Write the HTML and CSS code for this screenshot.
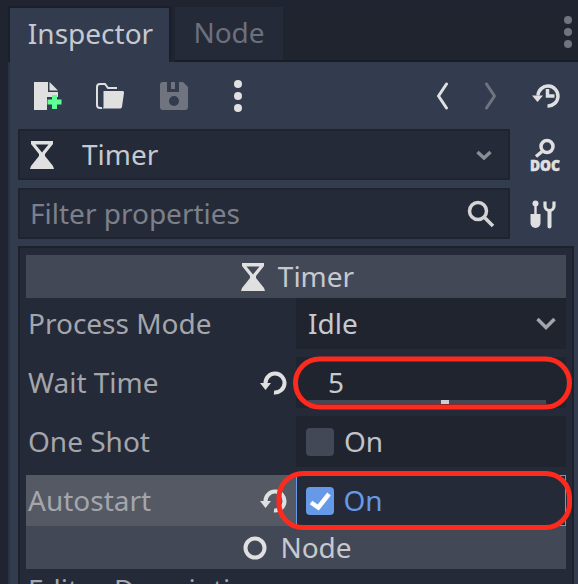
FILE: index.html
```html
<!DOCTYPE html>
<html lang="en">
<head>
<meta charset="utf-8">
<title>Inspector</title>
<link rel="stylesheet" href="styles.css">
</head>
<body>
<div class="dock">
  <div class="tabs">
    <div class="tab tab-active">Inspector</div>
    <div class="tab tab-idle">Node</div>
    <div class="tab-fill">
      <svg class="tab-menu" width="10" height="34" viewBox="0 0 10 34"><g fill="#71747f"><circle cx="5" cy="5" r="4"/><circle cx="5" cy="17" r="4"/><circle cx="5" cy="29" r="4"/></g></svg>
    </div>
  </div>
  <div class="panel">
    <div class="toolbar">
      <div class="tool-left">
        <svg class="tb-new" width="28" height="30" viewBox="0 0 28 30"><path fill="#e0e0e0" d="M0 1h14v10h10v5h-11v13H0z"/><path fill="#e0e0e0" d="M15.500 1L24 9.500h-8.500z"/><path fill="#5fff97" d="M18 17h5v4.500h4.500v5H23v4.500h-5v-4.500h-4.500v-5H18z" transform="translate(0 -3)"/></svg>
        <svg class="tb-open" width="28" height="26" viewBox="0 0 28 26"><path fill="none" stroke="#e0e0e0" stroke-width="2" d="M6 25H4a3 3 0 0 1-3-3V4a3 3 0 0 1 3-3h5l3 4h9"/><path fill="#e0e0e0" d="M8 8h18.500c1 0 1.600 .8 1.500 1.700l-2 14c-.2 1-1 1.800-2 1.800H6c1 0 1.500-1 1.500-2V9c0-.6 0-1 .5-1z"/></svg>
        <svg class="tb-save" width="28" height="28" viewBox="0 0 28 28"><path fill="#70747f" fill-rule="evenodd" d="M3 0h4v10h12V0h4l5 5v20a3 3 0 0 1-3 3H3a3 3 0 0 1-3-3V3a3 3 0 0 1 3-3zM11 0h4v7h-4zM14 14a5 5 0 1 0 0 10 5 5 0 0 0 0-10z"/></svg>
        <svg class="tb-dots" width="10" height="32" viewBox="0 0 10 32"><g fill="#e0e0e0"><circle cx="5" cy="4" r="4"/><circle cx="5" cy="16" r="4"/><circle cx="5" cy="28" r="4"/></g></svg>
      </div>
      <div class="tool-right">
        <svg width="13" height="28" viewBox="0 0 13 28"><path fill="none" stroke="#e0e0e0" stroke-width="3" stroke-linecap="round" stroke-linejoin="round" d="M10.500 2L2.500 14l8 12"/></svg>
        <svg class="tb-next" width="13" height="28" viewBox="0 0 13 28"><path fill="none" stroke="#70747f" stroke-width="3" stroke-linecap="round" stroke-linejoin="round" d="M2.500 2l8 12-8 12"/></svg>
        <svg class="tb-hist" width="28" height="26" viewBox="0 0 28 26"><path fill="none" stroke="#e0e0e0" stroke-width="3.500" d="M6 12.500A10 10 0 1 1 15.500 23"/><path fill="#e0e0e0" d="M0 12.500h11L5.500 19z"/><path fill="none" stroke="#e0e0e0" stroke-width="3.500" d="M15.500 6v7h7"/></svg>
      </div>
    </div>

    <div class="field-row">
      <div class="field field-select">
        <svg class="hourglass" width="24" height="28" viewBox="0 0 24 28"><path fill="#e0e0e0" fill-rule="evenodd" d="M1 0h22v3l-8 10v2l8 10 1 3H0l1-3 8-10v-2L1 3zM5.500 3.500L12 11.500l6.500-8z"/></svg>
        <span class="field-text">Timer</span>
        <svg class="caret" width="16" height="10" viewBox="0 0 16 10"><path fill="none" stroke="#8b8e97" stroke-width="3.500" d="M1.500 2L8 8l6.500-6"/></svg>
      </div>
      <svg class="side-icon" width="30" height="34" viewBox="0 0 30 34"><g fill="none" stroke="#e0e0e0" stroke-width="3.500"><circle cx="17" cy="8.500" r="6"/><path d="M12 13.500l-6 5"/></g><text class="doc-label" x="0" y="32.500" textLength="30" lengthAdjust="spacingAndGlyphs">DOC</text></svg>
    </div>

    <div class="field-row field-row-last">
      <div class="field field-filter">
        <span class="placeholder">Filter properties</span>
        <svg class="search" width="28" height="28" viewBox="0 0 28 28"><g fill="none" stroke="#d4d4d4" stroke-width="3.500"><circle cx="11" cy="11" r="8.500"/><path d="M17 17l9 9"/></g></svg>
      </div>
      <svg class="side-icon" width="26" height="30" viewBox="0 0 26 30"><g fill="#e0e0e0"><circle cx="5.500" cy="4.500" r="3"/><rect x="4.300" y="4" width="2.400" height="12"/><path d="M.5 15h10v9a5 5 0 0 1-10 0z"/><rect x="17.500" y="10" width="4" height="19.500" rx="2"/></g><path fill="none" stroke="#e0e0e0" stroke-width="3.200" d="M15 2.500v4.500a4.500 4.500 0 0 0 9 0V2.500"/></svg>
    </div>

    <div class="tree">
      <div class="section">
        <svg class="hourglass" width="24" height="28" viewBox="0 0 24 28"><path fill="#e0e0e0" fill-rule="evenodd" d="M1 0h22v3l-8 10v2l8 10 1 3H0l1-3 8-10v-2L1 3zM5.500 3.500L12 11.500l6.500-8z"/></svg>
        <span>Timer</span>
      </div>
      <div class="props">
        <div class="prop">
          <div class="prop-label"><span>Process Mode</span></div>
          <div class="prop-value value-select"><span>Idle</span>
            <svg width="20" height="13" viewBox="0 0 20 13"><path fill="none" stroke="#a3a5ab" stroke-width="3.500" d="M1.500 2L10 10.500 18.500 2"/></svg>
          </div>
        </div>
        <div class="prop">
          <div class="prop-label"><span>Wait Time</span>
            <svg class="reset" width="28" height="26" viewBox="0 0 28 26"><path fill="none" stroke="#e0e0e0" stroke-width="4" d="M5.500 13A9.500 9.500 0 1 1 14 22.500"/><path fill="#e0e0e0" d="M0 13h11l-5.500 7z"/></svg>
          </div>
          <div class="prop-value value-num">
            <span>5</span>
            <div class="slider"><div class="grabber"></div></div>
          </div>
        </div>
        <div class="prop">
          <div class="prop-label"><span>One Shot</span></div>
          <div class="prop-value value-check">
            <div class="check"></div><span>On</span>
          </div>
        </div>
        <div class="prop prop-hover">
          <div class="prop-label"><span>Autostart</span>
            <svg class="reset" width="28" height="26" viewBox="0 0 28 26"><path fill="none" stroke="#e0e0e0" stroke-width="4" d="M5.500 13A9.500 9.500 0 1 1 14 22.500"/><path fill="#e0e0e0" d="M0 13h11l-5.500 7z"/></svg>
          </div>
          <div class="prop-value value-check value-on">
            <div class="check check-on"><svg width="28" height="28" viewBox="0 0 28 28"><path fill="none" stroke="#fff" stroke-width="4.500" d="M5 15.500l7.300 5L23 7"/></svg></div><span>On</span>
          </div>
        </div>
      </div>
      <div class="section">
        <svg width="24" height="24" viewBox="0 0 24 24"><circle cx="12" cy="12" r="9.500" fill="none" stroke="#e0e0e0" stroke-width="4"/></svg>
        <span>Node</span>
      </div>
      <div class="clipped">Editor Description</div>
    </div>
  </div>
</div>
<svg class="annotations" width="578" height="584" viewBox="0 0 578 584">
  <g fill="none" stroke="#ff2a1e" stroke-width="5">
    <rect x="295.500" y="359" width="274" height="48" rx="24"/>
    <rect x="279" y="473.500" width="290.500" height="54" rx="24"/>
  </g>
</svg>
</body>
</html>
```
FILE: styles.css
```css
html, body {
  margin: 0;
  padding: 0;
  height: 584px;
  overflow: hidden;
}
body {
  position: relative;
  background: #1f2430;
  font-family: "Noto Sans", sans-serif;
  font-size: 28px;
  color: #cdcfd3;
}
.dock {
  height: 584px;
  padding: 6px 0 0 8px;
  box-sizing: border-box;
  display: flex;
  flex-direction: column;
}
.tabs {
  display: flex;
  height: 56px;
  flex: none;
}
.tab {
  box-sizing: border-box;
  line-height: 50px;
  text-align: center;
}
.tab-active {
  width: 163px;
  padding-left: 2px;
  background: #333c4f;
  border: 2px solid #1b1f29;
  border-bottom: 0;
  color: #c6c9cf;
}
.tab-idle {
  width: 108px;
  margin: 1px 0 0 4px;
  background: #252a38;
  color: #6c707c;
}
.tab-fill {
  flex: 1;
  display: flex;
  justify-content: flex-end;
  border-bottom: 2px solid #181c25;
  margin-left: -108px;
  z-index: -1;
  background: #20242f;
}
.tab-menu {
  margin: 9px 5px 0 0;
}
.tabs .tab-idle { border-bottom: 2px solid #181c25; height: 55px; }
.panel {
  flex: 1;
  min-height: 0;
  background: #333c4f;
  border-left: 2px solid #2b3242;
  padding: 0 4px 0 8px;
  overflow: hidden;
}
.toolbar {
  height: 67px;
  display: flex;
  justify-content: space-between;
  align-items: center;
  padding: 0 14px 0 16px;
}
.tool-left, .tool-right {
  display: flex;
  align-items: center;
}
.tb-open { margin-left: 34px; }
.tb-save { margin-left: 36px; }
.tb-dots { margin-left: 45px; }
.tb-next { margin-left: 35px; }
.tb-hist { margin-left: 35px; }
.field-row {
  display: flex;
  align-items: center;
  height: 51px;
  margin-bottom: 8px;
}
.field-row-last { margin-bottom: 7px; }
.field {
  width: 492px;
  height: 51px;
  box-sizing: border-box;
  background: #252a38;
  border: 2px solid #20242f;
  display: flex;
  align-items: center;
  flex: none;
}
.field span,
.section span,
.prop span {
  margin-bottom: 2px;
}
.side-icon { margin-left: 20px; }
.field-select { padding: 0 16px 0 10px; }
.field-text { margin-left: 28px; flex: 1; color: #c6c9cf; }
.field-filter { padding: 0 13px 0 10px; justify-content: space-between; }
.placeholder { color: #7c808a; }
.tree {
  box-sizing: border-box;
  height: 345px;
  background: #252a38;
  border: 2px solid #1d212b;
  border-bottom: 0;
  padding: 7px 6px 0 6px;
  overflow: hidden;
}
.section {
  height: 43px;
  box-sizing: border-box;
  padding-left: 3px;
  background: #434857;
  display: flex;
  align-items: center;
  justify-content: center;
  gap: 13px;
  color: #c6c9cf;
}
.props {
  display: flex;
  flex-direction: column;
  gap: 8px;
}
.prop {
  display: grid;
  grid-template-columns: 270px 270px;
  height: 51px;
}
.prop-label {
  display: flex;
  align-items: center;
  justify-content: space-between;
  padding: 0 8px 0 2px;
  color: #a4a6ac;
}
.prop-hover .prop-label {
  background: #555964;
}
.prop-value {
  display: flex;
  align-items: center;
  background: #20242f;
  box-sizing: border-box;
  position: relative;
}
.value-select {
  justify-content: space-between;
  padding: 0 10px 0 12px;
  color: #c6c9cf;
}
.value-num {
  padding-left: 32px;
  color: #c6c9cf;
}
.slider {
  position: absolute;
  left: 12px;
  right: 20px;
  bottom: 4px;
  height: 4px;
  background: #434857;
}
.grabber {
  position: absolute;
  left: 133px;
  top: 0;
  width: 8px;
  height: 4px;
  background: #ccced2;
}
.value-check {
  padding-left: 10px;
  gap: 10px;
  color: #c0c2c7;
}
.check {
  width: 28px;
  height: 28px;
  border-radius: 4px;
  background: #434857;
  flex: none;
  display: flex;
  align-items: center;
  justify-content: center;
}
.check-on { background: #6699e8; }
.value-on {
  background: #252a38;
  border: 1.500px solid #6699e8;
  padding-left: 8.500px;
  color: #6699e8;
}
.clipped {
  padding-left: 2px;
  line-height: 40px;
  color: #a4a6ac;
  white-space: nowrap;
}
.doc-label {
  font-family: "Noto Sans", sans-serif;
  font-size: 15px;
  font-weight: 900;
  fill: #e0e0e0;
  stroke: #e0e0e0;
  stroke-width: .5;
}
.annotations {
  position: absolute;
  left: 0;
  top: 0;
  pointer-events: none;
}
```
